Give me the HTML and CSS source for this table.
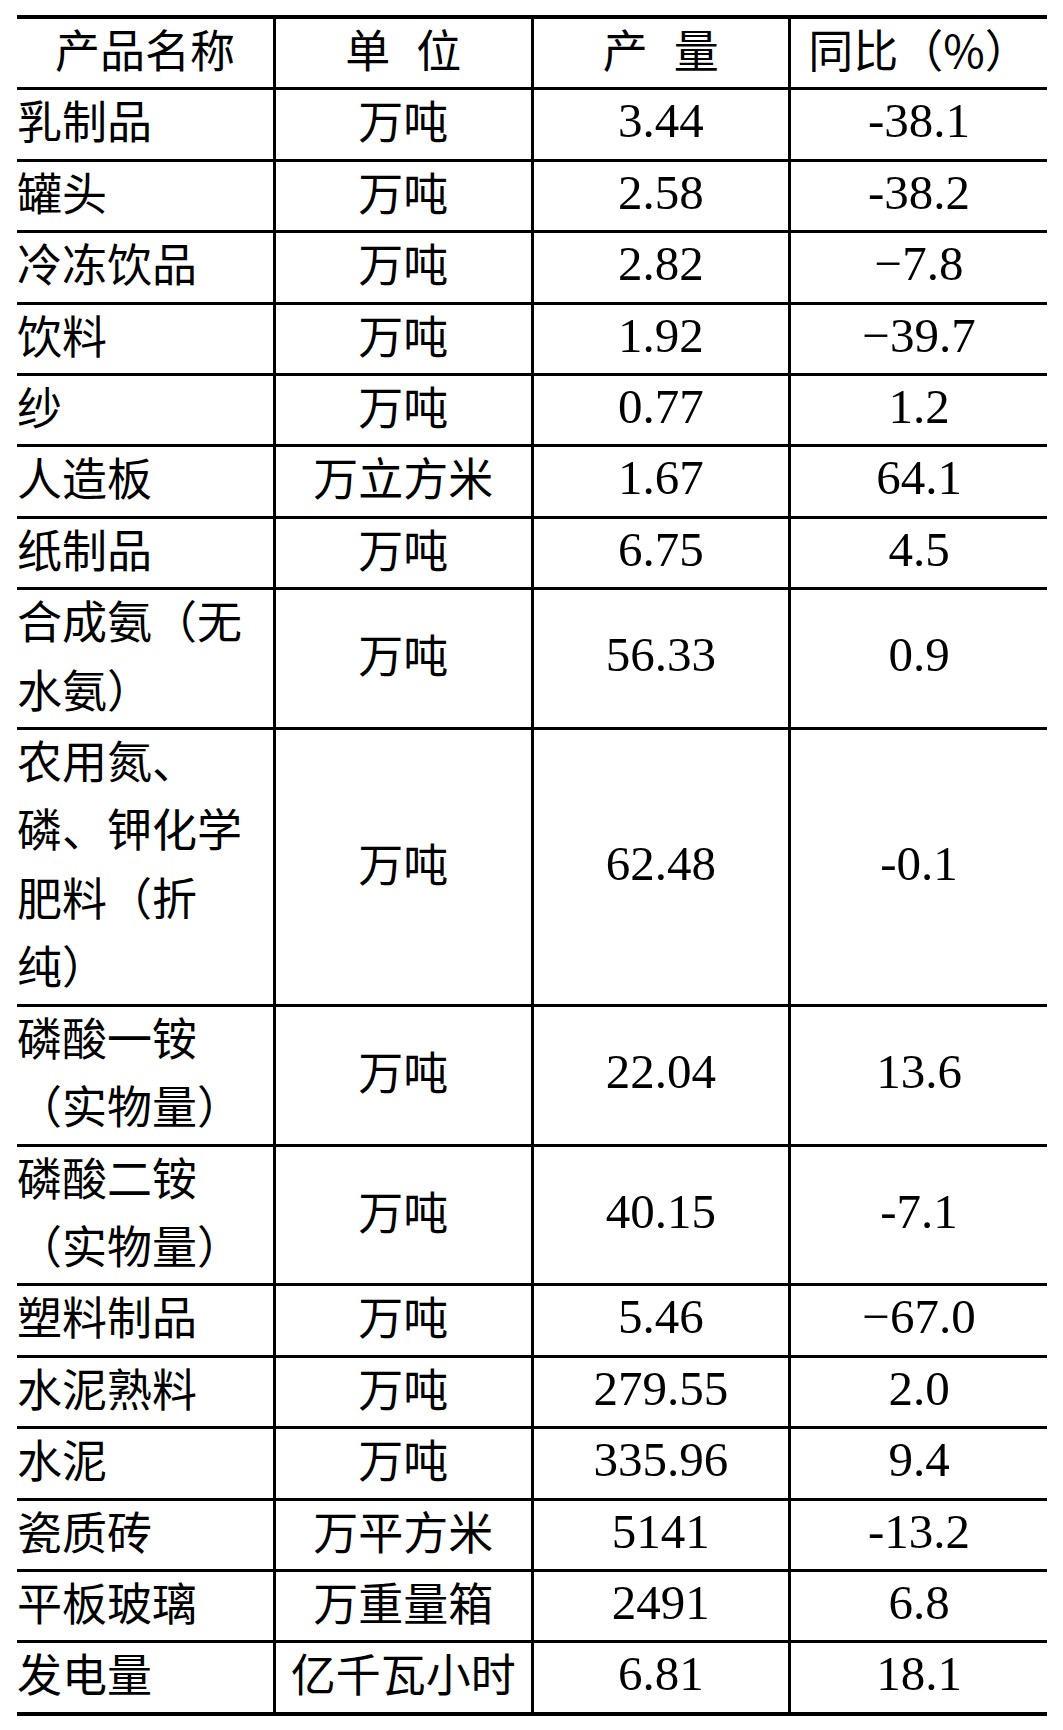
FILE: index.html
```html
<!DOCTYPE html>
<html lang="zh-CN">
<head>
<meta charset="utf-8">
<title>产品产量</title>
<link rel="stylesheet" href="styles.css">
</head>
<body>
<table class="tbl">
  <colgroup><col class="c"><col class="c"><col class="c"><col class="c"></colgroup>
  <thead>
    <tr class="hd"><th><span class="t">产品名称</span></th><th><span class="t">单 位</span></th><th><span class="t">产 量</span></th><th><span class="t">同比（%）</span></th></tr>
  </thead>
  <tbody>
    <tr><td class="name"><span class="t">乳制品</span></td><td class="unit"><span class="t">万吨</span></td><td class="num"><span class="n">3.44</span></td><td class="num"><span class="n">-38.1</span></td></tr>
    <tr><td class="name"><span class="t">罐头</span></td><td class="unit"><span class="t">万吨</span></td><td class="num"><span class="n">2.58</span></td><td class="num"><span class="n">-38.2</span></td></tr>
    <tr><td class="name"><span class="t">冷冻饮品</span></td><td class="unit"><span class="t">万吨</span></td><td class="num"><span class="n">2.82</span></td><td class="num"><span class="n">−7.8</span></td></tr>
    <tr><td class="name"><span class="t">饮料</span></td><td class="unit"><span class="t">万吨</span></td><td class="num"><span class="n">1.92</span></td><td class="num"><span class="n">−39.7</span></td></tr>
    <tr><td class="name"><span class="t">纱</span></td><td class="unit"><span class="t">万吨</span></td><td class="num"><span class="n">0.77</span></td><td class="num"><span class="n">1.2</span></td></tr>
    <tr><td class="name"><span class="t">人造板</span></td><td class="unit"><span class="t">万立方米</span></td><td class="num"><span class="n">1.67</span></td><td class="num"><span class="n">64.1</span></td></tr>
    <tr><td class="name"><span class="t">纸制品</span></td><td class="unit"><span class="t">万吨</span></td><td class="num"><span class="n">6.75</span></td><td class="num"><span class="n">4.5</span></td></tr>
    <tr><td class="name"><span class="t">合成氨（无水氨）</span></td><td class="unit"><span class="t">万吨</span></td><td class="num"><span class="n">56.33</span></td><td class="num"><span class="n">0.9</span></td></tr>
    <tr><td class="name"><span class="t">农用氮、磷、钾化学肥料（折纯）</span></td><td class="unit"><span class="t">万吨</span></td><td class="num"><span class="n">62.48</span></td><td class="num"><span class="n">-0.1</span></td></tr>
    <tr><td class="name"><span class="t">磷酸一铵（实物量）</span></td><td class="unit"><span class="t">万吨</span></td><td class="num"><span class="n">22.04</span></td><td class="num"><span class="n">13.6</span></td></tr>
    <tr><td class="name"><span class="t">磷酸二铵（实物量）</span></td><td class="unit"><span class="t">万吨</span></td><td class="num"><span class="n">40.15</span></td><td class="num"><span class="n">-7.1</span></td></tr>
    <tr><td class="name"><span class="t">塑料制品</span></td><td class="unit"><span class="t">万吨</span></td><td class="num"><span class="n">5.46</span></td><td class="num"><span class="n">−67.0</span></td></tr>
    <tr><td class="name"><span class="t">水泥熟料</span></td><td class="unit"><span class="t">万吨</span></td><td class="num"><span class="n">279.55</span></td><td class="num"><span class="n">2.0</span></td></tr>
    <tr><td class="name"><span class="t">水泥</span></td><td class="unit"><span class="t">万吨</span></td><td class="num"><span class="n">335.96</span></td><td class="num"><span class="n">9.4</span></td></tr>
    <tr><td class="name"><span class="t">瓷质砖</span></td><td class="unit"><span class="t">万平方米</span></td><td class="num"><span class="n">5141</span></td><td class="num"><span class="n">-13.2</span></td></tr>
    <tr><td class="name"><span class="t">平板玻璃</span></td><td class="unit"><span class="t">万重量箱</span></td><td class="num"><span class="n">2491</span></td><td class="num"><span class="n">6.8</span></td></tr>
    <tr><td class="name"><span class="t">发电量</span></td><td class="unit"><span class="t">亿千瓦小时</span></td><td class="num"><span class="n">6.81</span></td><td class="num"><span class="n">18.1</span></td></tr>
  </tbody>
</table>
</body>
</html>
```
FILE: styles.css
```css
html, body {
  margin: 0;
  padding: 0;
  background: #fff;
  color: #000;
}
body {
  padding: 15px 0 0 17px;
  font-family: "Noto Sans CJK SC", "Noto Sans", sans-serif;
}
.tbl {
  width: 1030px;
  table-layout: fixed;
  border-collapse: collapse;
  font-size: 45px;
  line-height: 68.4px;
  text-spacing-trim: space-all;
}
.tbl .c { width: 25%; }
.tbl th, .tbl td {
  padding: 0;
  border-top: 3px solid #000;
  border-bottom: 3px solid #000;
  text-align: center;
  vertical-align: middle;
  font-weight: normal;
}
.tbl th + th, .tbl td + td {
  border-left: 3px solid #000;
}
.hd th {
  border-top-width: 4px;
  word-spacing: 16px;
}
.tbl tbody tr:last-child td {
  border-bottom-width: 4px;
}
.tbl td.name {
  text-align: left;
}
.t {
  display: block;
  margin: -4px 0 4px;
}
.n {
  display: block;
  margin: -3px 0 3px;
}
.tbl td.num {
  font-family: "Liberation Serif", "DejaVu Serif", serif;
  font-size: 49px;
}
```
